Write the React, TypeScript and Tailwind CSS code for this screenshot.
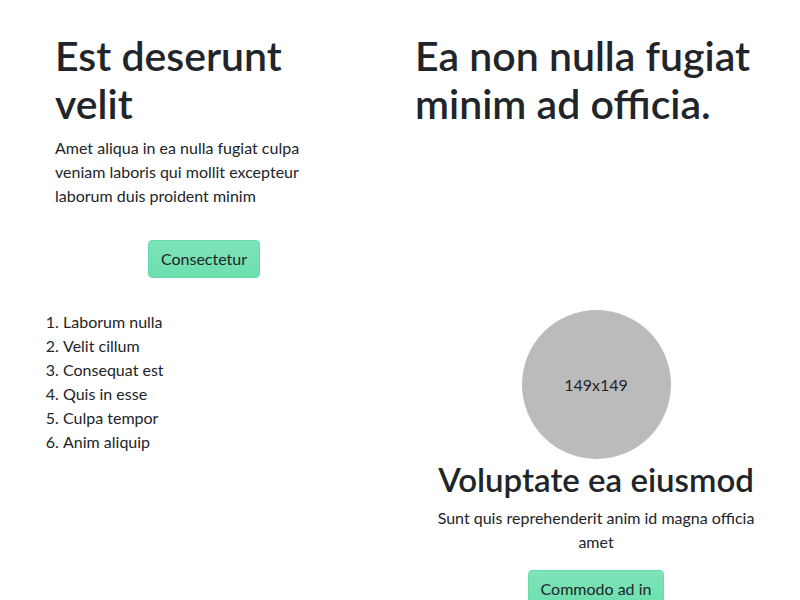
import React from "react";

const btn =
  "inline-block rounded-[4px] border border-[#66dba8] bg-gradient-to-b from-[#7de4b8] to-[#6ddfae] px-3 py-[6px] text-[16px] leading-[24px] text-[#212529]";

export default function App() {
  return (
    <div
      className="h-[600px] w-[800px] overflow-hidden bg-white text-[#212529]"
      style={{ fontFamily: "Lato, 'Open Sans', sans-serif" }}
    >
      {/* Row 1 */}
      <div className="flex pt-[32px]">
        <div className="ml-[55px] w-[298px]">
          <h1 className="mb-2 text-[41px] font-semibold leading-[48px]">Est deserunt velit</h1>
          <p className="mb-4 text-[16px] leading-[24px]">
            Amet aliqua in ea nulla fugiat culpa veniam laboris qui mollit excepteur laborum duis proident minim
          </p>
          <div className="flex justify-center pt-[16px]">
            <button className={btn}>Consectetur</button>
          </div>
        </div>
        <div className="ml-[62px] w-[345px]">
          <h1 className="text-[41px] font-semibold leading-[48px]">Ea non nulla fugiat minim ad officia.</h1>
        </div>
      </div>

      {/* Row 2 */}
      <div className="mt-[32px] flex">
        <div className="ml-[31px] w-[300px]">
          <ol className="list-decimal pl-8 text-[16px] leading-[24px]">
            <li>Laborum nulla</li>
            <li>Velit cillum</li>
            <li>Consequat est</li>
            <li>Quis in esse</li>
            <li>Culpa tempor</li>
            <li>Anim aliquip</li>
          </ol>
        </div>
        <div className="ml-[101px] flex w-[328px] flex-col items-center text-center">
          <div className="flex h-[149px] w-[149px] items-center justify-center rounded-full bg-[#bbbbbb] text-[16px]">
            149x149
          </div>
          <h2 className="mt-[1px] mb-2 text-[33px] font-semibold leading-[38px]">Voluptate ea eiusmod</h2>
          <p className="mb-4 text-[16px] leading-[24px]">
            Sunt quis reprehenderit anim id magna officia amet
          </p>
          <button className={btn}>Commodo ad in</button>
        </div>
      </div>
    </div>
  );
}
